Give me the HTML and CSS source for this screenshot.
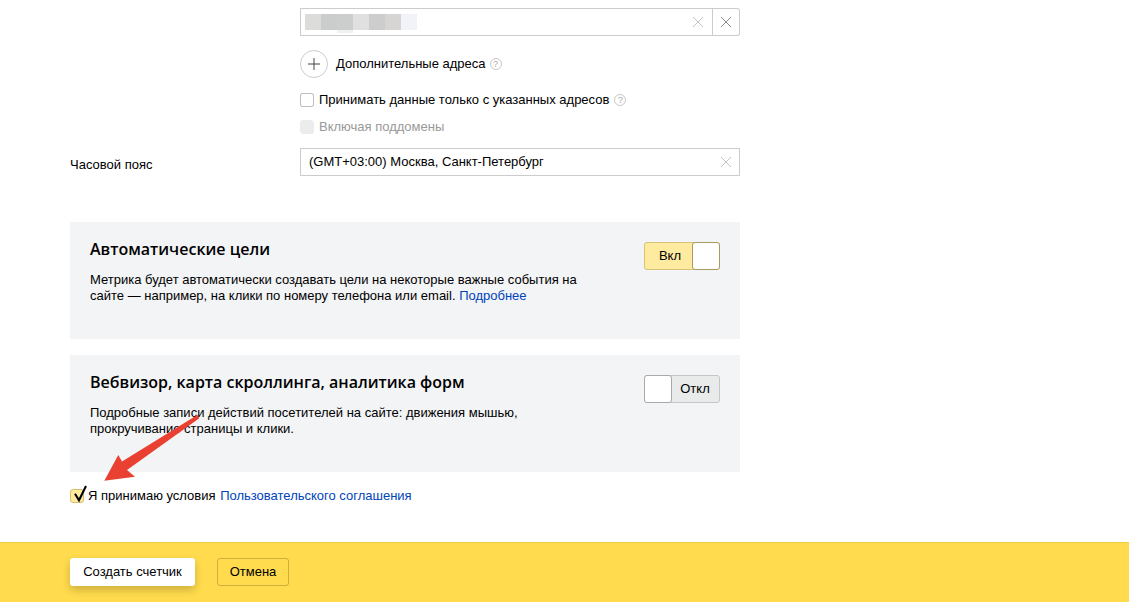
FILE: index.html
```html
<!DOCTYPE html>
<html lang="ru">
<head>
<meta charset="utf-8">
<title>Создать счетчик</title>
<link rel="stylesheet" href="styles.css">
</head>
<body>
<main class="form">
  <div class="row row-sites">
    <div class="label"></div>
    <div class="control">
      <div class="input input-url">
        <div class="redacted">
          <i class="px p1"></i><i class="px p2"></i><i class="px p3"></i><i class="px p4"></i><i class="px p5"></i><i class="px p6"></i><i class="px p7"></i>
        </div>
        <svg class="x x-light" viewBox="0 0 12 12"><path d="M1 1l10 10M11 1L1 11"/></svg>
        <span class="remove"><svg class="x x-dark" viewBox="0 0 12 12"><path d="M1 1l10 10M11 1L1 11"/></svg></span>
      </div>
      <div class="add-line">
        <span class="add-btn"><svg viewBox="0 0 12 12"><path d="M6 0v12M0 6h12"/></svg></span>
        <span class="add-text">Дополнительные адреса</span>
        <span class="hint hint-add">?</span>
      </div>
      <label class="check-line line-only">
        <span class="box"></span>
        <span>Принимать данные только с указанных адресов</span>
        <span class="hint">?</span>
      </label>
      <label class="check-line line-sub is-disabled">
        <span class="box"></span>
        <span>Включая поддомены</span>
      </label>
    </div>
  </div>
  <div class="row row-tz">
    <div class="label">Часовой пояс</div>
    <div class="control">
      <div class="input input-tz">
        <span class="value">(GMT+03:00) Москва, Санкт-Петербург</span>
        <svg class="x x-light" viewBox="0 0 12 12"><path d="M1 1l10 10M11 1L1 11"/></svg>
      </div>
    </div>
  </div>

  <section class="card card-goals">
    <div class="card-text">
      <h2>Автоматические цели</h2>
      <p>Метрика будет автоматически создавать цели на некоторые важные события на сайте — например, на клики по номеру телефона или email. <a href="#">Подробнее</a></p>
    </div>
    <div class="toggle toggle-on"><span class="toggle-label">Вкл</span><span class="knob"></span></div>
  </section>

  <section class="card card-webvisor">
    <div class="card-text">
      <h2>Вебвизор, карта скроллинга, аналитика форм</h2>
      <p>Подробные записи действий посетителей на сайте: движения мышью, прокручивание страницы и клики.</p>
    </div>
    <div class="toggle toggle-off"><span class="knob"></span><span class="toggle-label">Откл</span></div>
  </section>

  <label class="check-line line-accept">
    <span class="box box-checked">
      <svg viewBox="0 0 18 18"><path d="M5 9.700L9 16.300L16 2"/></svg>
    </span>
    <span>Я принимаю условия <a class="terms" href="#">Пользовательского соглашения</a></span>
  </label>
</main>

<footer class="footer">
  <button class="btn btn-primary" type="button">Создать счетчик</button>
  <button class="btn btn-ghost" type="button">Отмена</button>
</footer>

<svg class="arrow" viewBox="0 0 105 75" aria-hidden="true">
  <path d="M4.300 70.700L18.300 45L22 51.500L97.300 5L99.300 8.300L27 60L35 66.700Z"/>
</svg>
</body>
</html>
```

FILE: styles.css
```css
* { box-sizing: border-box; }

html, body {
  margin: 0;
  height: 606px;
  overflow: hidden;
  background: #fff;
}

body {
  position: relative;
  font-family: "Liberation Sans", Arial, sans-serif;
  font-size: 13px;
  line-height: 16px;
  color: #000;
}

a { color: #04b; text-decoration: none; }

.form {
  width: 740px;
  height: 542px;
  padding: 8px 0 0 70px;
}

.row { display: flex; }
.label { width: 230px; flex: none; }
.control { width: 440px; }

.row-tz { margin-top: 13px; align-items: flex-start; }
.row-tz .label { padding-top: 9px; }

.input {
  display: flex;
  align-items: center;
  height: 28px;
  border: 1px solid rgba(0, 0, 0, .2);
  background: #fff;
}

.input-url { border-radius: 0 3px 3px 0; padding-left: 4px; }
.input-tz { padding: 0 7px 0 8px; }

.value { flex: 1; margin-top: -1px; }

.redacted { display: flex; flex: 1; height: 16px; margin-top: -1px; }
.px { display: block; width: 16px; height: 16px; }
.p1 { background: #dcdcdb; }
.p2 { background: #cacdcc; }
.p3 { background: #cbcecd; box-shadow: 0 3px 0 #eff1f2; }
.p4 { background: #e0e0e0; }
.p5 { background: #cdcdcd; }
.p6 { background: #d6d5d4; }
.p7 { background: #f2f3f9; }

.x { width: 12px; height: 12px; flex: none; }
.x path { fill: none; stroke-width: 1; }
.x-light path { stroke: #c4c4c4; }
.x-dark path { stroke: #8c8c8c; }

.input-url .x-light { margin-right: 8px; }
.remove {
  display: flex;
  align-items: center;
  justify-content: center;
  width: 27px;
  height: 26px;
  border-left: 1px solid rgba(0, 0, 0, .2);
}

.add-line {
  display: flex;
  align-items: center;
  height: 28px;
  margin-top: 14px;
}

.add-btn {
  display: flex;
  align-items: center;
  justify-content: center;
  width: 28px;
  height: 28px;
  margin-right: 8px;
  border: 1px solid rgba(0, 0, 0, .2);
  border-radius: 50%;
}
.add-btn svg { width: 12px; height: 12px; }
.add-btn path { fill: none; stroke: #444; stroke-width: 1; }

.hint {
  display: inline-block;
  width: 12px;
  height: 12px;
  margin-left: 5px;
  border: 1px solid #c8c8c8;
  border-radius: 50%;
  color: #aaa;
  font-size: 9px;
  line-height: 10px;
  text-align: center;
}
.hint-add { margin-left: 4px; }

.check-line { display: flex; align-items: center; height: 16px; }
.line-only { margin-top: 14px; }
.line-sub { margin-top: 11px; }
.is-disabled { color: #999; }

.box {
  display: block;
  position: relative;
  flex: none;
  width: 14px;
  height: 14px;
  margin-right: 5px;
  border: 1px solid rgba(0, 0, 0, .25);
  border-radius: 3px;
  background: #fff;
}
.is-disabled .box { border-color: #ececec; background: #ececec; }

.box-checked { margin-right: 4px; border-color: #d9bf6c; background: #ffeba0; }
.box-checked svg {
  position: absolute;
  left: -1px;
  top: -6px;
  width: 18px;
  height: 18px;
  overflow: visible;
}
.box-checked path { fill: none; stroke: #000; stroke-width: 2; }

.card {
  display: flex;
  justify-content: space-between;
  width: 670px;
  height: 117px;
  padding: 19px 20px 0;
  background: #f3f4f6;
}
.card-goals { margin-top: 46px; }
.card-webvisor { margin-top: 16px; }

.card-text { width: 500px; }

.card h2 {
  margin: 0;
  font-family: "Open Sans", "Liberation Sans", sans-serif;
  font-size: 16px;
  line-height: 16px;
  font-weight: 600;
}
.card p { margin: 15px 0 0; }

.toggle {
  display: flex;
  width: 76px;
  height: 28px;
  margin-top: 1px;
  border-radius: 3px;
}
.toggle-label { flex: 1; text-align: center; line-height: 26px; }
.knob { width: 28px; margin: -1px; border-radius: 3px; background: #fff; }

.toggle-on { border: 1px solid #d7c279; background: #ffeba0; }
.toggle-on .toggle-label { padding-left: 2px; }
.toggle-on .knob { border: 1px solid #a89a63; }

.toggle-off { border: 1px solid #c6c6c6; background: #e9eaea; }
.toggle-off .knob { border: 1px solid #a9a9a9; }

.line-accept { margin-top: 16px; }
.terms { margin-left: 1px; }

.footer {
  display: flex;
  align-items: flex-start;
  gap: 22px;
  height: 60px;
  padding: 15px 0 0 70px;
  background: #ffdb4d;
  border-top: 1px solid #f0cd45;
}

.btn {
  height: 28px;
  padding: 0;
  border-radius: 3px;
  font: inherit;
  color: #000;
  cursor: pointer;
}
.btn-primary {
  width: 125px;
  border: 0;
  background: #fff;
  box-shadow: 0 4px 8px rgba(0, 0, 0, .2);
}
.btn-ghost {
  width: 72px;
  border: 1px solid rgba(0, 0, 0, .2);
  background: transparent;
}

.arrow {
  position: absolute;
  left: 100px;
  top: 410px;
  width: 105px;
  height: 75px;
}
.arrow path { fill: #ea4031; }
```
